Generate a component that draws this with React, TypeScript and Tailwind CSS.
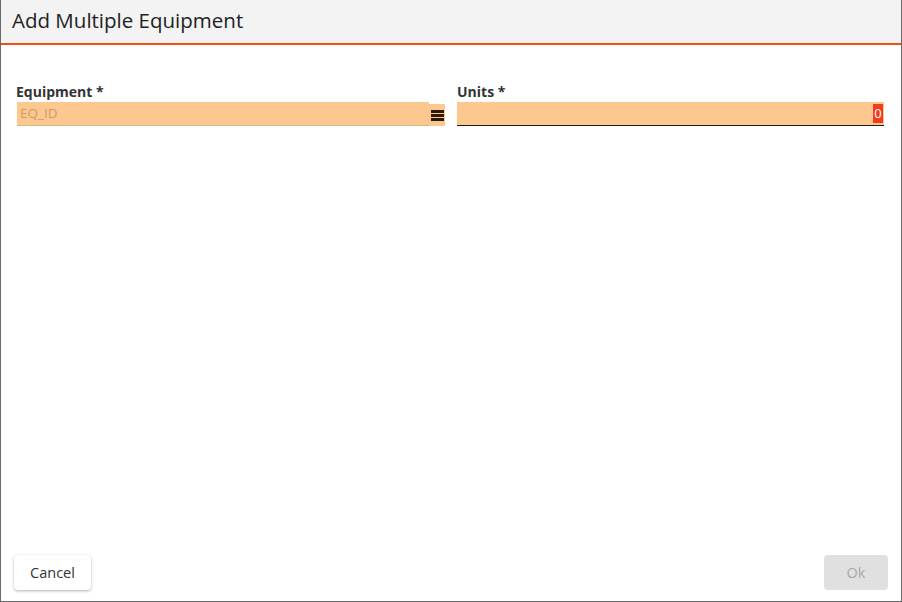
export default function App() {
  return (
    <div className="flex h-[602px] w-[902px] flex-col overflow-hidden border border-t-0 border-[#6b6b6b] bg-white font-['Open_Sans',sans-serif] text-[#222]">
      <header className="flex h-[45px] shrink-0 items-center border-b-2 border-[#f24e16] bg-[#f3f3f3] px-[11px] pb-[2px]">
        <h1 className="text-[20.5px] leading-none text-[#222]">Add Multiple Equipment</h1>
      </header>

      <div className="flex flex-1 gap-[12px] pl-[15px] pr-[17px] pt-[38px]">
        <div className="flex w-[429px] flex-col">
          <label className="text-[14px] font-bold leading-[18px] text-[#333]">Equipment *</label>
          <div className="mt-[1px] flex h-[24px] items-stretch">
            <div className="ml-[1px] flex flex-1 items-center border-b border-[#e0b482] bg-[#fcc88f] px-[3px] text-[13.5px] text-[#d09a68]">
              EQ_ID
            </div>
            <button className="mt-[2px] flex w-[16px] flex-col items-center justify-center gap-[1px] bg-[#fcc88f]">
              <span className="h-[3px] w-[13px] bg-[#2a1a0a]" />
              <span className="h-[3px] w-[13px] bg-[#2a1a0a]" />
              <span className="h-[3px] w-[13px] bg-[#2a1a0a]" />
            </button>
          </div>
        </div>

        <div className="flex flex-1 flex-col">
          <label className="text-[14px] font-bold leading-[18px] text-[#333]">Units *</label>
          <div className="mt-[1px] flex h-[24px] items-center justify-end border-b border-[#1a1a1a] bg-[#fcc88f] pr-[1px]">
            <span className="flex h-[19px] w-[10px] items-center justify-center bg-[#f23c1c] text-[13px] leading-none text-white">
              0
            </span>
          </div>
        </div>
      </div>

      <footer className="flex h-[46px] shrink-0 items-start justify-between px-[13px]">
        <button className="h-[35px] w-[77px] rounded-[4px] bg-white text-[14.5px] text-[#333] shadow-[0_1px_3px_rgba(0,0,0,0.3)]">
          Cancel
        </button>
        <button className="h-[35px] w-[64px] rounded-[4px] bg-[#e0e0e0] text-[14.5px] text-[#a8a8a8]">
          Ok
        </button>
      </footer>
    </div>
  );
}
